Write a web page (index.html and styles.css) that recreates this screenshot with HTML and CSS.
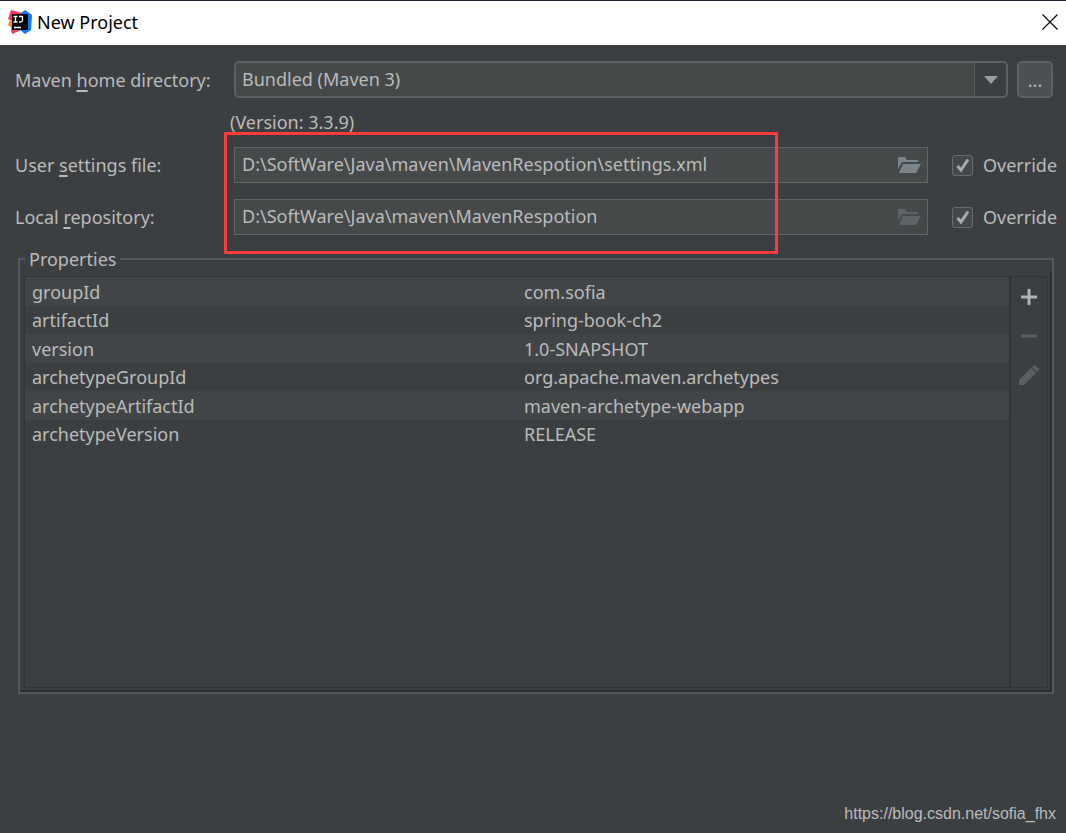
FILE: index.html
```html
<!DOCTYPE html>
<html lang="en">
<head>
<meta charset="utf-8">
<title>New Project</title>
<link rel="stylesheet" href="styles.css">
</head>
<body class="window">
<header class="titlebar">
  <svg class="logo" viewBox="0 0 24 24" aria-hidden="true">
    <path fill="#ff315f" d="M3 0 14 3 12 15 5 24 3 20 4 11 0 9z"/>
    <path fill="#ff8a17" d="M2 10 0 15 4 18 6 12z"/>
    <path fill="#087cfa" d="M13 3 17 0 24 5 23 20 17 24 12 20z"/>
    <path fill="#e83a68" d="M3 19 13 20 4 24z"/>
    <path fill="#000" d="M4 4h16v16H4z"/>
    <path fill="none" stroke="#fff" stroke-width="1.300" d="M5.500 6.500h4M7.500 6.500v5.500M5.500 12h4M11 6.500h3.500v4q0 1.700-3.500 1.500M6 17.500h7"/>
  </svg>
  <h1 class="title">New Project</h1>
  <button class="close" type="button" aria-label="Close">
    <svg viewBox="0 0 16 16" width="16" height="16"><path d="M.5.5l15 15M15.500.5l-15 15" stroke="#000" stroke-width="1.100"/></svg>
  </button>
</header>
<main class="content">
  <div class="row home-row">
    <label class="label" for="home">Maven <u>h</u>ome directory:</label>
    <div class="combo">
      <select id="home" class="select"><option>Bundled (Maven 3)</option></select>
      <span class="arrow"><svg width="14" height="8" viewBox="0 0 14 8"><path fill="#9b9ea0" d="M0 0h14L7 8z"/></svg></span>
    </div>
    <button class="browse" type="button">...</button>
  </div>
  <p class="version">(Version: 3.3.9)</p>
  <div class="paths">
    <div class="row">
      <label class="label" for="settings">User <u>s</u>ettings file:</label>
      <div class="field">
        <input id="settings" class="input" type="text" value="D:\SoftWare\Java\maven\MavenRespotion\settings.xml">
        <button class="folder" type="button" aria-label="Browse settings file"><svg width="24" height="18" viewBox="0 0 24 18"><path fill="currentColor" d="M1 13V1h7l2 3h11v2H5zM6 8h18l-5 9H2z"/></svg></button>
      </div>
      <label class="override"><input class="check" type="checkbox" checked>Override</label>
    </div>
    <div class="row">
      <label class="label" for="repo">Local <u>r</u>epository:</label>
      <div class="field">
        <input id="repo" class="input" type="text" value="D:\SoftWare\Java\maven\MavenRespotion">
        <button class="folder dim" type="button" aria-label="Browse repository"><svg width="24" height="18" viewBox="0 0 24 18"><path fill="currentColor" d="M1 13V1h7l2 3h11v2H5zM6 8h18l-5 9H2z"/></svg></button>
      </div>
      <label class="override"><input class="check" type="checkbox" checked>Override</label>
    </div>
    <div class="highlight"></div>
  </div>
  <fieldset class="properties">
    <legend class="legend">Properties</legend>
    <div class="well">
      <div class="panel">
        <div class="list">
          <table class="table">
            <tr><td>groupId</td><td>com.sofia</td></tr>
            <tr><td>artifactId</td><td>spring-book-ch2</td></tr>
            <tr><td>version</td><td>1.0-SNAPSHOT</td></tr>
            <tr><td>archetypeGroupId</td><td>org.apache.maven.archetypes</td></tr>
            <tr><td>archetypeArtifactId</td><td>maven-archetype-webapp</td></tr>
            <tr><td>archetypeVersion</td><td>RELEASE</td></tr>
          </table>
        </div>
        <div class="tools">
          <button class="tool" type="button" aria-label="Add"><svg width="20" height="20" viewBox="0 0 20 20"><path stroke="#afb1b3" stroke-width="3" d="M2 10h16M10 2v16"/></svg></button>
          <button class="tool" type="button" aria-label="Remove" disabled><svg width="20" height="20" viewBox="0 0 20 20"><path stroke="#5c5e5f" stroke-width="3" d="M2 10h16"/></svg></button>
          <button class="tool" type="button" aria-label="Edit" disabled><svg width="20" height="20" viewBox="0 0 20 20"><path fill="#5c5e5f" d="M0 20v-5L12 3l5 5L5 20zM13 2l1.500-1.500q1-1 2 0l3 3q1 1 0 2L18 7z"/></svg></button>
        </div>
      </div>
    </div>
  </fieldset>
</main>
<footer class="footer">https://blog.csdn.net/sofia_fhx</footer>
</body>
</html>
```
FILE: styles.css
```css
* { box-sizing: border-box; }

.window {
  margin: 0;
  min-height: 100vh;
  display: flex;
  flex-direction: column;
  background: #3c3f41;
  color: #bbbbbb;
  font: 18px/24px "Noto Sans", "Open Sans", sans-serif;
}

button, input, select { font: inherit; color: inherit; margin: 0; }
button { padding: 0; border: 0; background: none; }
svg { display: block; }

.titlebar {
  display: flex;
  align-items: center;
  height: 45px;
  padding: 0 8px 2px;
  border-top: 1px solid #1b2330;
  background: #fff;
  color: #000;
}
.logo { width: 24px; height: 24px; }
.title { flex: 1; margin: 0 0 0 5px; font: inherit; }

.content { flex: 1; display: flex; flex-direction: column; padding-top: 16px; }
.row { display: flex; align-items: center; padding-left: 15px; }
.home-row { padding-right: 13px; }
.label { width: 219px; flex: none; }
.label u { text-underline-offset: 3px; text-decoration-thickness: 2px; text-decoration-skip-ink: none; }

.combo {
  position: relative;
  flex: 1;
  display: flex;
  height: 37px;
  border: 2px solid #5e6162;
  border-radius: 5px;
  background: #45494a;
}
.select { appearance: none; flex: 1; padding: 0 40px 2px 6px; border: 0; background: none; }
.arrow {
  position: absolute;
  inset: 0 0 0 auto;
  width: 32px;
  display: grid;
  place-items: center;
  border-left: 1px solid #5e6162;
  border-radius: 0 3px 3px 0;
  background: #3c3f41;
  pointer-events: none;
}
.browse {
  width: 36px;
  height: 37px;
  margin-left: 9px;
  border: 2px solid #5e6162;
  border-radius: 5px;
  background: #4c5052;
}

.version { margin: 12px 0 13px 230px; }
.paths { position: relative; display: grid; gap: 16px; }
.field {
  flex: 1;
  display: flex;
  align-items: center;
  height: 36px;
  padding-right: 6px;
  border: 1px solid #646464;
  background: #45494a;
}
.input { flex: 1; min-width: 0; padding: 0 0 2px 7px; border: 0; outline: 0; background: none; }
.folder { color: #7b858c; }
.folder.dim { color: #5d6467; }
.override { display: flex; align-items: center; gap: 10px; width: 138px; padding-left: 24px; }
.check {
  appearance: none;
  width: 21px;
  height: 21px;
  border: 1px solid #6b6b6b;
  border-radius: 3px;
  background: #43494a;
}
.check:checked {
  background-image: url("data:image/svg+xml,%3Csvg xmlns='http://www.w3.org/2000/svg' viewBox='0 0 19 19'%3E%3Cpath d='M4.500 10l3.500 4 7-10.500' fill='none' stroke='%23aaa' stroke-width='3'/%3E%3C/svg%3E");
}
.highlight {
  position: absolute;
  left: 224px;
  top: -15px;
  bottom: -19px;
  width: 52%;
  border: 3px solid #ff3b3b;
  pointer-events: none;
}

.properties {
  min-width: 0;
  margin: 12px 12px 0 18px;
  padding: 0;
  border: 2px solid #55595c;
}
.legend { margin-left: 5px; padding: 0 4px; }
.well {
  display: flex;
  min-height: calc(100vh - 412px);
  padding: 5px 2px 2px 4px;
  border: solid #2b2d2e;
  border-width: 0 2px 2px 0;
}
.panel { flex: 1; display: flex; border: 1px solid #323435; }
.list { flex: 1; border-right: 2px solid #323232; }
.table { width: 100%; border-collapse: collapse; table-layout: fixed; }
.table td { height: 28px; padding: 0 7px; }
.table tr:nth-child(odd) { background: #414547; }
.table tr:nth-child(odd) td { height: 29px; }
.tools { width: 36px; display: flex; flex-direction: column; align-items: center; gap: 19px; padding-top: 10px; }

.footer {
  padding: 0 10px 8px;
  text-align: right;
  font: 16px/22px "Liberation Sans", Arial, sans-serif;
}
```
